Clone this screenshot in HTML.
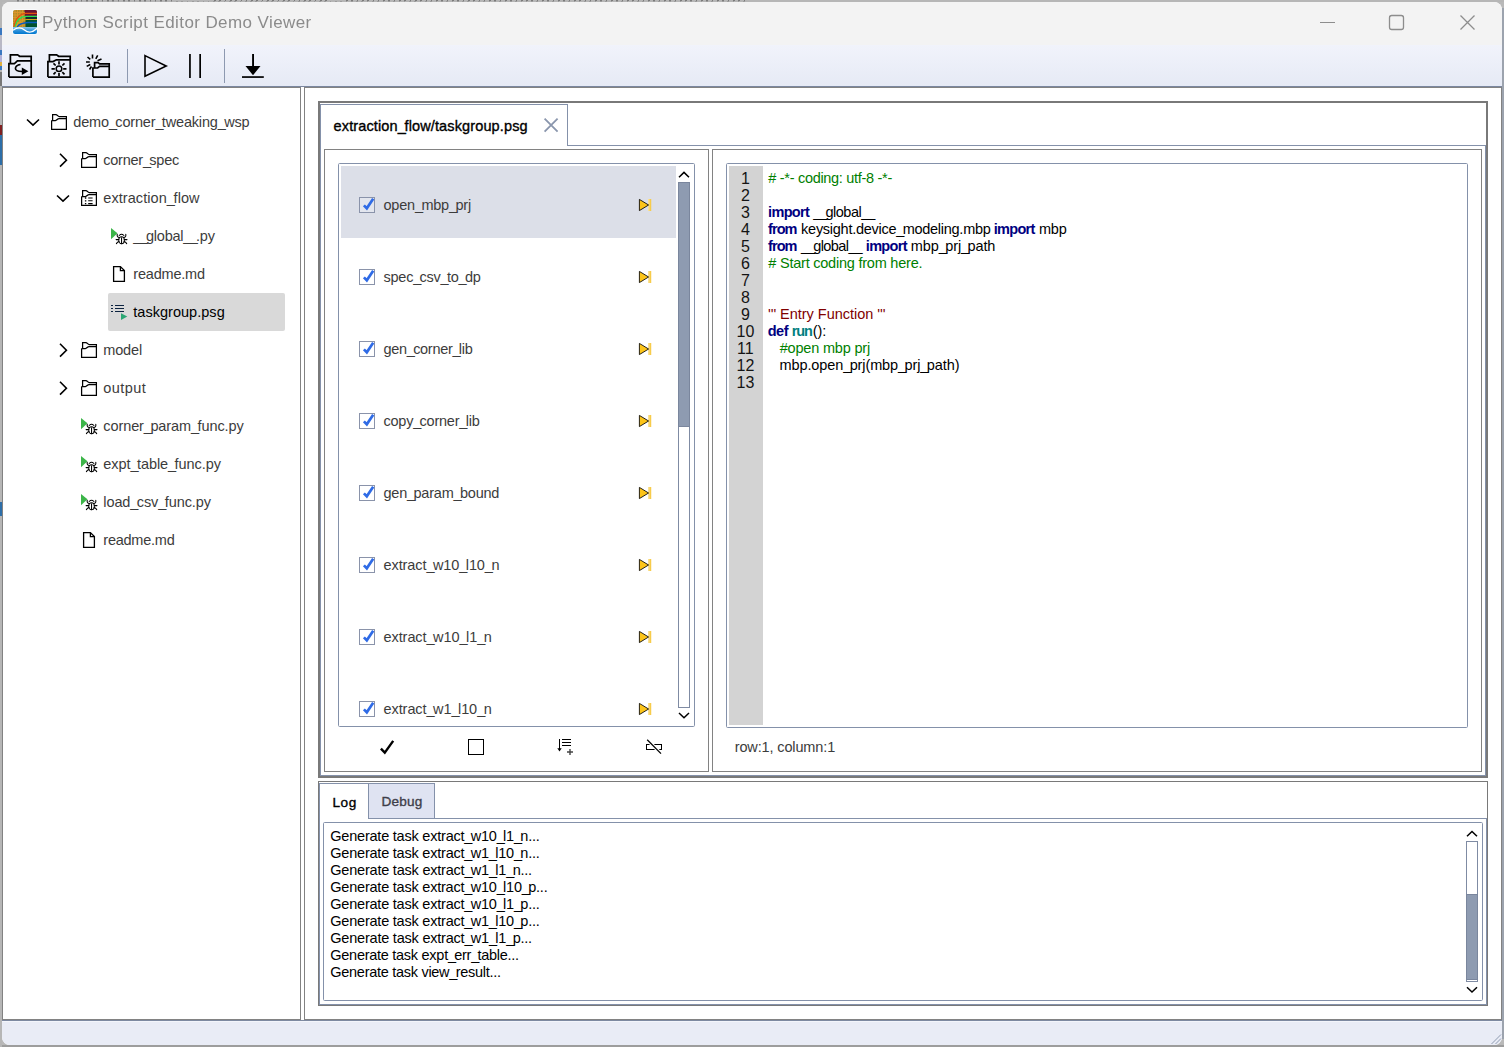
<!DOCTYPE html>
<html><head><meta charset="utf-8"><title>Python Script Editor Demo Viewer</title>
<style>
html,body{margin:0;padding:0;}
body{width:1504px;height:1047px;overflow:hidden;background:#b9b9b9;font-family:"Liberation Sans",sans-serif;position:relative;}
#win{position:absolute;left:0;top:0;width:1504px;height:1047px;clip-path:inset(2px 2px 2px 2px round 8px);background:#fff;}
svg{position:absolute;left:0;top:0;}
.t i{font-style:normal;}
.t{position:absolute;white-space:pre;line-height:24px;height:24px;font-family:"Liberation Sans",sans-serif;}
</style></head><body>
<div style="position:absolute;left:0;top:0;width:1504px;height:2px;background:#b6b6b6"></div>
<div style="position:absolute;left:0;top:1045px;width:1504px;height:2px;background:#9d9d9d"></div>
<div style="position:absolute;left:1502px;top:8px;width:2px;height:1031px;background:#9ca3ae"></div>
<div style="position:absolute;left:0;top:0;width:2px;height:1047px;background:linear-gradient(#b6b6b6 0 28px,#3a78c0 28px 35px,#b9b9c6 35px 50px,#3a78c0 50px 55px,#b0b0d8 55px 62px,#e0b040 62px 66px,#3a78c0 66px 70px,#b6b6b6 70px 72px,#777 72px 86px,#b6b6b6 86px 125px,#802020 125px 135px,#2d6ea8 135px 165px,#b6b6b6 165px 502px,#2d6ea8 502px 516px,#b6b6b6 516px)"></div>
<div style="position:absolute;left:17px;top:0;width:158px;height:1px;background:repeating-linear-gradient(90deg,#7a7a7a 0 1.6px,transparent 1.6px 5.3px)"></div>
<div style="position:absolute;left:214px;top:0;width:116px;height:1px;background:repeating-linear-gradient(90deg,#7a7a7a 0 1.6px,transparent 1.6px 5.3px)"></div>
<div style="position:absolute;left:346px;top:0;width:402px;height:1px;background:repeating-linear-gradient(90deg,#7a7a7a 0 1.6px,transparent 1.6px 5.3px)"></div>
<div style="position:absolute;left:17px;top:1px;width:731px;height:1px;background:repeating-linear-gradient(90deg,rgba(110,110,110,.35) 0 1.6px,transparent 1.6px 5.3px)"></div>
<div id="win">
<svg width="1504" height="1047" viewBox="0 0 1504 1047">
<defs>
<linearGradient id="tb" x1="0" y1="0" x2="0" y2="1"><stop offset="0" stop-color="#f1f3fb"/><stop offset="1" stop-color="#e6eaf5"/></linearGradient>
<linearGradient id="sea" x1="0" y1="0" x2="0" y2="1"><stop offset="0" stop-color="#8cc6ea"/><stop offset="0.55" stop-color="#2a8fd8"/><stop offset="1" stop-color="#0078d0"/></linearGradient>
<linearGradient id="ybar" x1="0" y1="0" x2="1" y2="0"><stop offset="0" stop-color="#fbe7a8"/><stop offset="1" stop-color="#f6c431"/></linearGradient>
</defs>
<rect x="0" y="0" width="1504" height="45" fill="#f3f3f3" />
<rect x="0" y="45" width="1504" height="41" fill="url(#tb)" />
<rect x="0" y="86" width="1504" height="1" fill="#7b879f" />
<rect x="2" y="87" width="299" height="1" fill="#828282" />
<rect x="2" y="1019" width="299" height="1" fill="#828282" />
<rect x="2" y="87" width="1" height="933" fill="#828282" />
<rect x="300" y="87" width="1" height="933" fill="#828282" />
<rect x="304" y="87" width="1198" height="1" fill="#828282" />
<rect x="304" y="1019" width="1198" height="1" fill="#828282" />
<rect x="304" y="87" width="1" height="933" fill="#828282" />
<rect x="1501" y="87" width="1" height="933" fill="#828282" />
<rect x="0" y="1020" width="1504" height="1" fill="#7d89a1" />
<rect x="0" y="1021" width="1504" height="1" fill="#f3f5fb" />
<rect x="0" y="1022" width="1504" height="25" fill="#e9ecf6" />
<path d="M1491.5,1044 L1501,1034.5 M1495.5,1044 L1501,1038.5" stroke="#8e9ab0" stroke-width="1" fill="none" />
<g>
<rect x="12" y="9" width="26" height="26" rx="3" fill="#f8f9fb"/>
<clipPath id="ic"><rect x="13" y="10" width="24" height="24" rx="2"/></clipPath>
<g clip-path="url(#ic)">
<rect x="13" y="10" width="24" height="17" fill="#ad8c2c"/>
<rect x="24.5" y="10" width="13" height="6" fill="#6a1530"/>
<rect x="25.5" y="16" width="12" height="4" fill="#12302e"/>
<rect x="25.5" y="20" width="12" height="7" fill="#02522f"/>
<path d="M13,12.5 H25 M13,15 H25 M13,17.5 H25 M13,20 H25 M13,22.500 H25 M13,25 H25 M15,10 V27 M17.500,10 V27 M20,10 V27 M22.500,10 V27" stroke="#ea982a" stroke-width="0.9" opacity="0.85"/>
<path d="M14,27 C15,19 20,13.6 26,13.4 H37" stroke="#e2500f" stroke-width="1.2" fill="none"/>
<path d="M15,27 C16.500,20 20,16.600 26,16.400 H37" stroke="#25e24f" stroke-width="1.2" fill="none"/>
<path d="M16,27 C18,22 21,19.800 27,19.500 H37" stroke="#d6a81f" stroke-width="1.2" fill="none"/>
<path d="M17,27 C19,24 22,22.800 28,22.500 H37" stroke="#0a5cc0" stroke-width="1.3" fill="none"/>
<rect x="13" y="27" width="24" height="7" fill="url(#sea)"/>
<path d="M13,30.300 C17,27.200 21,27 24.500,30 C28,33 32,33.300 37,28.300" stroke="#fff" stroke-width="1.3" fill="none"/>
</g></g>
<rect x="1320" y="22" width="15" height="1" fill="#8d8d8d" />
<rect x="1389.5" y="15.5" width="14" height="14" rx="2.2" fill="none" stroke="#8d8d8d" stroke-width="1.3"/>
<path d="M1460.5,15.5 L1474.5,29.5 M1474.5,15.5 L1460.5,29.5" stroke="#8d8d8d" stroke-width="1.3" fill="none" />
<path d="M8.9,77.1 H31.2 V56.3 H19.6 L17.6,54.8 H10.4 V63.6 M8.9,77.1 V63.6 H14.4 L17.4,60.8 H31.2" stroke="#000" stroke-width="1.7" fill="none" stroke-linejoin="miter"/>
<path d="M20.5,64.5 C15.5,65 14,69 17,70.6 C18.6,71.6 21,71.5 23,71.5" stroke="#000" stroke-width="1.5" fill="none" />
<polygon points="21.8,67.6 28.4,71.3 21.8,75" fill="#000"/>
<path d="M47.9,77.1 H70.2 V56.3 H58.6 L56.6,54.8 H49.4 V61.6 M47.9,77.1 V61.6 H53 L56.4,59.8 H70.2" stroke="#000" stroke-width="1.7" fill="none" />
<circle cx="59" cy="68.8" r="2.8" fill="none" stroke="#000" stroke-width="1.5"/>
<path d="M63.20,68.80 L66.50,68.80 M62.32,72.12 L64.52,74.32 M59.00,73.00 L59.00,76.30 M55.68,72.12 L53.48,74.32 M54.80,68.80 L51.50,68.80 M55.68,65.48 L53.48,63.28 M59.00,64.60 L59.00,61.30 M62.32,65.48 L64.52,63.28" stroke="#000" stroke-width="1.7" fill="none" />
<path d="M92.9,77.1 H109.2 V63.8 H99.6 L98.1,62.6 H94.6 V68 M92.9,77.1 V68 H97.6 L99.6,66.4 H109.2" stroke="#000" stroke-width="1.7" fill="none" />
<path d="M92.5,54.4 V58.6 M97.7,55.4 L95.8,58.8 M101.5,59 L97.5,60.7 M87.5,57 L90.3,59.4 M86,62 H89.8 M86.7,66.4 L90.3,64.5 M89.5,69.5 L91.5,66.5" stroke="#000" stroke-width="1.6" fill="none" />
<rect x="127" y="49" width="1" height="34" fill="#8d99b0" />
<rect x="224" y="49" width="1" height="34" fill="#8d99b0" />
<path d="M145,55.6 L166.2,66 L145,76.3 Z" stroke="#000" stroke-width="1.6" fill="none" stroke-linejoin="miter"/>
<rect x="189.1" y="54" width="1.7" height="24" fill="#000"/><rect x="199.3" y="54" width="1.7" height="24" fill="#000"/>
<rect x="252.1" y="54" width="1.9" height="13" fill="#000"/>
<polygon points="245.5,66 260.5,66 253,75.3" fill="#000"/>
<rect x="242" y="76.2" width="21.8" height="1.7" fill="#000"/>
<rect x="108" y="293" width="177" height="38" rx="2" fill="#d9d9d9"/>
<path d="M27,119.5 L33,125.1 L39,119.5" stroke="#000" stroke-width="1.6" fill="none" />
<g transform="translate(51,114)" fill="none" stroke="#000" stroke-width="1.25"><path d="M0.6,6.5 V15.4 H15.4 V2.5 H8.2 C6.8,2.5 6.4,0.6 4.8,0.6 H1.6 V6.5 M0.6,6.5 H4.4 C6,6.5 6.4,4.6 8,4.6 H15.4"/></g>
<path d="M60,153.8 L66.4,160.2 L60,166.6" stroke="#000" stroke-width="1.6" fill="none" />
<g transform="translate(81,152)" fill="none" stroke="#000" stroke-width="1.25"><path d="M0.6,6.5 V15.4 H15.4 V2.5 H8.2 C6.8,2.5 6.4,0.6 4.8,0.6 H1.6 V6.5 M0.6,6.5 H4.4 C6,6.5 6.4,4.6 8,4.6 H15.4"/></g>
<path d="M57,195.5 L63,201.1 L69,195.5" stroke="#000" stroke-width="1.6" fill="none" />
<g transform="translate(81,190)" fill="none" stroke="#000" stroke-width="1.25"><path d="M0.6,6.5 V15.4 H15.4 V2.5 H8.2 C6.8,2.5 6.4,0.6 4.8,0.6 H1.6 V6.5 M0.6,6.5 H4.4 C6,6.5 6.4,4.6 8,4.6 H15.4"/><path d="M7.2,8 H11.6 M7.2,10.800 H11.6 M7.2,13.600 H11.6" stroke-width="1.1"/><path d="M3.9,8 H5.3 M3.9,10.800 H5.3 M3.9,13.600 H5.3" stroke-width="1.3"/></g>
<g transform="translate(111,228)"><polygon points="0,0 6.5,5.3 0,11.2" fill="#3cb549"/><g fill="none" stroke="#000" stroke-width="1.05" stroke-linecap="round" stroke-linejoin="round"><ellipse cx="10.55" cy="12.300" rx="2.8" ry="3.5" fill="#fff"/><path d="M10.55,9.800 V15.6"/><path d="M8.200,7.500 Q10.55,5.100 12.900,7.500"/><path d="M6.200,6.200 V8 Q6.400,9.100 7.900,9.400 M14.800,6.200 V8 Q14.600,9.100 13.200,9.400"/><path d="M7.800,11.600 H5.100 M13.300,11.600 H16 M8,13.500 L6.600,14.200 L5.400,15.700 M13.100,13.500 L14.500,14.200 L15.700,15.700"/></g></g>
<g transform="translate(111,266)" fill="none" stroke="#000" stroke-width="1.3"><path d="M2.600,0.600 H9.400 L13.400,4.600 V15.400 H2.600 Z M9.400,0.600 V4.600 H13.400"/></g>
<g transform="translate(111,304)"><path d="M0,1.500 H2 M0,4.500 H2 M0,7.500 H2 M4,1.500 H13 M4,4.500 H13 M4,7.500 H13" stroke="#0c2340" stroke-width="1.1" fill="none"/><polygon points="10,9.200 16.300,12.600 10,16" fill="#2ba673"/></g>
<path d="M60,343.8 L66.4,350.2 L60,356.6" stroke="#000" stroke-width="1.6" fill="none" />
<g transform="translate(81,342)" fill="none" stroke="#000" stroke-width="1.25"><path d="M0.6,6.5 V15.4 H15.4 V2.5 H8.2 C6.8,2.5 6.4,0.6 4.8,0.6 H1.6 V6.5 M0.6,6.5 H4.4 C6,6.5 6.4,4.6 8,4.6 H15.4"/></g>
<path d="M60,381.8 L66.4,388.2 L60,394.6" stroke="#000" stroke-width="1.6" fill="none" />
<g transform="translate(81,380)" fill="none" stroke="#000" stroke-width="1.25"><path d="M0.6,6.5 V15.4 H15.4 V2.5 H8.2 C6.8,2.5 6.4,0.6 4.8,0.6 H1.6 V6.5 M0.6,6.5 H4.4 C6,6.5 6.4,4.6 8,4.6 H15.4"/></g>
<g transform="translate(81,418)"><polygon points="0,0 6.5,5.3 0,11.2" fill="#3cb549"/><g fill="none" stroke="#000" stroke-width="1.05" stroke-linecap="round" stroke-linejoin="round"><ellipse cx="10.55" cy="12.300" rx="2.8" ry="3.5" fill="#fff"/><path d="M10.55,9.800 V15.6"/><path d="M8.200,7.500 Q10.55,5.100 12.900,7.500"/><path d="M6.200,6.200 V8 Q6.400,9.100 7.900,9.400 M14.800,6.200 V8 Q14.600,9.100 13.200,9.400"/><path d="M7.800,11.600 H5.100 M13.300,11.600 H16 M8,13.500 L6.600,14.200 L5.400,15.700 M13.100,13.500 L14.500,14.200 L15.700,15.700"/></g></g>
<g transform="translate(81,456)"><polygon points="0,0 6.5,5.3 0,11.2" fill="#3cb549"/><g fill="none" stroke="#000" stroke-width="1.05" stroke-linecap="round" stroke-linejoin="round"><ellipse cx="10.55" cy="12.300" rx="2.8" ry="3.5" fill="#fff"/><path d="M10.55,9.800 V15.6"/><path d="M8.200,7.500 Q10.55,5.100 12.900,7.500"/><path d="M6.200,6.200 V8 Q6.400,9.100 7.900,9.400 M14.800,6.200 V8 Q14.600,9.100 13.200,9.400"/><path d="M7.800,11.600 H5.100 M13.300,11.600 H16 M8,13.500 L6.600,14.200 L5.400,15.700 M13.100,13.500 L14.500,14.200 L15.700,15.700"/></g></g>
<g transform="translate(81,494)"><polygon points="0,0 6.5,5.3 0,11.2" fill="#3cb549"/><g fill="none" stroke="#000" stroke-width="1.05" stroke-linecap="round" stroke-linejoin="round"><ellipse cx="10.55" cy="12.300" rx="2.8" ry="3.5" fill="#fff"/><path d="M10.55,9.800 V15.6"/><path d="M8.200,7.500 Q10.55,5.100 12.900,7.500"/><path d="M6.200,6.200 V8 Q6.400,9.100 7.900,9.400 M14.800,6.200 V8 Q14.600,9.100 13.200,9.400"/><path d="M7.800,11.600 H5.100 M13.300,11.600 H16 M8,13.500 L6.600,14.200 L5.400,15.700 M13.100,13.500 L14.500,14.200 L15.700,15.700"/></g></g>
<g transform="translate(81,532)" fill="none" stroke="#000" stroke-width="1.3"><path d="M2.600,0.600 H9.400 L13.400,4.600 V15.400 H2.600 Z M9.400,0.600 V4.600 H13.400"/></g>
<rect x="318" y="101" width="1170" height="2" fill="#797979" />
<rect x="318" y="776" width="1170" height="2" fill="#797979" />
<rect x="318" y="101" width="2" height="677" fill="#797979" />
<rect x="1486" y="101" width="2" height="677" fill="#797979" />
<rect x="320" y="104" width="248" height="1" fill="#8491aa" />
<rect x="320" y="104" width="1" height="672" fill="#8491aa" />
<rect x="567" y="104" width="1" height="42" fill="#8491aa" />
<rect x="567" y="145" width="919" height="1" fill="#8491aa" />
<rect x="1485" y="145" width="1" height="631" fill="#8491aa" />
<rect x="320" y="775" width="1166" height="1" fill="#8491aa" />
<path d="M544.6,118.6 L557.6,131.6 M557.6,118.6 L544.6,131.6" stroke="#8a96ad" stroke-width="1.8" fill="none" />
<rect x="324" y="149" width="385" height="1" fill="#828282" />
<rect x="324" y="771" width="385" height="1" fill="#828282" />
<rect x="324" y="149" width="1" height="623" fill="#828282" />
<rect x="708" y="149" width="1" height="623" fill="#828282" />
<rect x="712" y="149" width="770" height="1" fill="#828282" />
<rect x="712" y="771" width="770" height="1" fill="#828282" />
<rect x="712" y="149" width="1" height="623" fill="#828282" />
<rect x="1481" y="149" width="1" height="623" fill="#828282" />
<rect x="338.5" y="163.5" width="356" height="563" rx="1.1" fill="none" stroke="#8491aa" stroke-width="1"/>
<rect x="341" y="166" width="335" height="72" fill="#dcdfe8" />
<rect x="359.5" y="197.5" width="15" height="15" fill="#e3e6ee" stroke="#8a93aa" stroke-width="1"/>
<path d="M363.9,205.4 L366.8,208.3 L373.2,198.8" stroke="#2f6be6" stroke-width="2.7" fill="none" />
<rect x="648" y="199" width="3.2" height="12" fill="url(#ybar)"/>
<polygon points="639.4,199.4 648.6,205 639.4,210.6" fill="#fcc419" stroke="#000" stroke-width="0.85" stroke-linejoin="miter"/>
<rect x="359.5" y="269.5" width="15" height="15" fill="#fff" stroke="#8a93aa" stroke-width="1"/>
<path d="M363.9,277.4 L366.8,280.3 L373.2,270.8" stroke="#2f6be6" stroke-width="2.7" fill="none" />
<rect x="648" y="271" width="3.2" height="12" fill="url(#ybar)"/>
<polygon points="639.4,271.4 648.6,277 639.4,282.6" fill="#fcc419" stroke="#000" stroke-width="0.85" stroke-linejoin="miter"/>
<rect x="359.5" y="341.5" width="15" height="15" fill="#fff" stroke="#8a93aa" stroke-width="1"/>
<path d="M363.9,349.4 L366.8,352.3 L373.2,342.8" stroke="#2f6be6" stroke-width="2.7" fill="none" />
<rect x="648" y="343" width="3.2" height="12" fill="url(#ybar)"/>
<polygon points="639.4,343.4 648.6,349 639.4,354.6" fill="#fcc419" stroke="#000" stroke-width="0.85" stroke-linejoin="miter"/>
<rect x="359.5" y="413.5" width="15" height="15" fill="#fff" stroke="#8a93aa" stroke-width="1"/>
<path d="M363.9,421.4 L366.8,424.3 L373.2,414.8" stroke="#2f6be6" stroke-width="2.7" fill="none" />
<rect x="648" y="415" width="3.2" height="12" fill="url(#ybar)"/>
<polygon points="639.4,415.4 648.6,421 639.4,426.6" fill="#fcc419" stroke="#000" stroke-width="0.85" stroke-linejoin="miter"/>
<rect x="359.5" y="485.5" width="15" height="15" fill="#fff" stroke="#8a93aa" stroke-width="1"/>
<path d="M363.9,493.4 L366.8,496.3 L373.2,486.8" stroke="#2f6be6" stroke-width="2.7" fill="none" />
<rect x="648" y="487" width="3.2" height="12" fill="url(#ybar)"/>
<polygon points="639.4,487.4 648.6,493 639.4,498.6" fill="#fcc419" stroke="#000" stroke-width="0.85" stroke-linejoin="miter"/>
<rect x="359.5" y="557.5" width="15" height="15" fill="#fff" stroke="#8a93aa" stroke-width="1"/>
<path d="M363.9,565.4 L366.8,568.3 L373.2,558.8" stroke="#2f6be6" stroke-width="2.7" fill="none" />
<rect x="648" y="559" width="3.2" height="12" fill="url(#ybar)"/>
<polygon points="639.4,559.4 648.6,565 639.4,570.6" fill="#fcc419" stroke="#000" stroke-width="0.85" stroke-linejoin="miter"/>
<rect x="359.5" y="629.5" width="15" height="15" fill="#fff" stroke="#8a93aa" stroke-width="1"/>
<path d="M363.9,637.4 L366.8,640.3 L373.2,630.8" stroke="#2f6be6" stroke-width="2.7" fill="none" />
<rect x="648" y="631" width="3.2" height="12" fill="url(#ybar)"/>
<polygon points="639.4,631.4 648.6,637 639.4,642.6" fill="#fcc419" stroke="#000" stroke-width="0.85" stroke-linejoin="miter"/>
<rect x="359.5" y="701.5" width="15" height="15" fill="#fff" stroke="#8a93aa" stroke-width="1"/>
<path d="M363.9,709.4 L366.8,712.3 L373.2,702.8" stroke="#2f6be6" stroke-width="2.7" fill="none" />
<rect x="648" y="703" width="3.2" height="12" fill="url(#ybar)"/>
<polygon points="639.4,703.4 648.6,709 639.4,714.6" fill="#fcc419" stroke="#000" stroke-width="0.85" stroke-linejoin="miter"/>
<path d="M679,177.2 L684,172.4 L689,177.2" stroke="#000" stroke-width="1.5" fill="none" />
<rect x="678" y="182" width="12" height="526" fill="#fff" />
<rect x="678" y="182" width="12" height="1" fill="#7f8ba3" />
<rect x="678" y="707" width="12" height="1" fill="#7f8ba3" />
<rect x="678" y="182" width="1" height="526" fill="#7f8ba3" />
<rect x="689" y="182" width="1" height="526" fill="#7f8ba3" />
<rect x="678" y="182" width="12" height="245" fill="#7a869d" />
<rect x="679" y="183" width="10" height="243" fill="#8e9bb1" />
<path d="M679,713 L684,717.8 L689,713" stroke="#000" stroke-width="1.5" fill="none" />
<path d="M380.9,748.6 L384.8,752.7 L393.2,740.9" stroke="#000" stroke-width="2.4" fill="none" />
<rect x="468" y="739" width="16" height="1" fill="#000" />
<rect x="468" y="754" width="16" height="1" fill="#000" />
<rect x="468" y="739" width="1" height="16" fill="#000" />
<rect x="483" y="739" width="1" height="16" fill="#000" />
<rect x="559" y="739" width="1" height="11" fill="#000" />
<polygon points="557.3,748.3 561.7,748.3 559.5,751.6" fill="#000"/>
<rect x="562" y="739" width="9" height="1" fill="#000" />
<rect x="562" y="742" width="9" height="1" fill="#000" />
<rect x="562" y="745" width="9" height="1" fill="#000" />
<path d="M567,752 H573 M570,749 V755" stroke="#444" stroke-width="1.4" fill="none" />
<rect x="646.5" y="744.5" width="15" height="5" fill="none" stroke="#000" stroke-width="1"/>
<path d="M648.5,741 L659.8,752.4" stroke="#fff" stroke-width="3.4" fill="none" />
<path d="M647.2,739.8 L661,753.6" stroke="#000" stroke-width="1.3" fill="none" />
<rect x="726.5" y="163.5" width="741" height="564" rx="1.1" fill="none" stroke="#8491aa" stroke-width="1"/>
<rect x="729" y="166" width="34" height="559" fill="#d3d3d3" />
<rect x="318" y="781" width="1170" height="1" fill="#797979" />
<rect x="318" y="1005" width="1170" height="1" fill="#797979" />
<rect x="318" y="781" width="1" height="225" fill="#797979" />
<rect x="1487" y="781" width="1" height="225" fill="#797979" />
<rect x="319" y="783" width="50" height="1" fill="#8491aa" />
<rect x="319" y="783" width="1" height="222" fill="#8491aa" />
<rect x="368" y="783" width="67" height="36" fill="#dfe3f2" />
<rect x="368" y="783" width="67" height="1" fill="#8491aa" />
<rect x="368" y="818" width="67" height="1" fill="#8491aa" />
<rect x="368" y="783" width="1" height="36" fill="#8491aa" />
<rect x="434" y="783" width="1" height="36" fill="#8491aa" />
<rect x="434" y="818" width="1053" height="1" fill="#8491aa" />
<rect x="1486" y="818" width="1" height="187" fill="#8491aa" />
<rect x="319" y="1004" width="1168" height="1" fill="#8491aa" />
<rect x="323.5" y="822.5" width="1159" height="178" rx="1.1" fill="none" stroke="#8491aa" stroke-width="1"/>
<path d="M1467,836.3 L1472,831.5 L1477,836.3" stroke="#000" stroke-width="1.5" fill="none" />
<rect x="1466" y="841" width="12" height="141" fill="#fff" />
<rect x="1466" y="841" width="12" height="1" fill="#7f8ba3" />
<rect x="1466" y="981" width="12" height="1" fill="#7f8ba3" />
<rect x="1466" y="841" width="1" height="141" fill="#7f8ba3" />
<rect x="1477" y="841" width="1" height="141" fill="#7f8ba3" />
<rect x="1466" y="894" width="12" height="86" fill="#7a869d" />
<rect x="1467" y="895" width="10" height="84" fill="#8e9bb1" />
<path d="M1467,987.2 L1472,992 L1477,987.2" stroke="#000" stroke-width="1.5" fill="none" />
</svg>
<span class="t" style="left:42.30px;top:11.31px;font-size:17px;color:#8b8b8b;letter-spacing:0.404px;will-change:transform;">Python Script Editor Demo Viewer</span>
<span class="t" style="left:73.30px;top:109.98px;font-size:14.5px;color:#3c3c3c;letter-spacing:-0.175px;">demo<i style="letter-spacing:-1.625px">_</i>corner<i style="letter-spacing:-1.625px">_</i>tweaking<i style="letter-spacing:-1.625px">_</i>wsp</span>
<span class="t" style="left:103.30px;top:147.98px;font-size:14.5px;color:#3c3c3c;letter-spacing:-0.244px;">corner<i style="letter-spacing:-1.694px">_</i>spec</span>
<span class="t" style="left:103.30px;top:185.98px;font-size:14.5px;color:#3c3c3c;letter-spacing:0.067px;">extraction<i style="letter-spacing:-1.383px">_</i>flow</span>
<span class="t" style="left:133.30px;top:223.98px;font-size:14.5px;color:#3c3c3c;letter-spacing:-0.242px;"><i style="letter-spacing:-1.692px">_</i><i style="letter-spacing:-1.692px">_</i>global<i style="letter-spacing:-1.692px">_</i><i style="letter-spacing:-1.692px">_</i>.py</span>
<span class="t" style="left:133.30px;top:261.98px;font-size:14.5px;color:#3c3c3c;letter-spacing:-0.204px;">readme.md</span>
<span class="t" style="left:133.30px;top:299.98px;font-size:14.5px;color:#000;letter-spacing:0.026px;">taskgroup.psg</span>
<span class="t" style="left:103.30px;top:337.98px;font-size:14.5px;color:#3c3c3c;letter-spacing:-0.173px;">model</span>
<span class="t" style="left:103.30px;top:375.98px;font-size:14.5px;color:#3c3c3c;letter-spacing:0.417px;">output</span>
<span class="t" style="left:103.30px;top:413.98px;font-size:14.5px;color:#3c3c3c;letter-spacing:-0.094px;">corner<i style="letter-spacing:-1.544px">_</i>param<i style="letter-spacing:-1.544px">_</i>func.py</span>
<span class="t" style="left:103.30px;top:451.98px;font-size:14.5px;color:#3c3c3c;letter-spacing:-0.072px;">expt<i style="letter-spacing:-1.522px">_</i>table<i style="letter-spacing:-1.522px">_</i>func.py</span>
<span class="t" style="left:103.30px;top:489.98px;font-size:14.5px;color:#3c3c3c;letter-spacing:-0.103px;">load<i style="letter-spacing:-1.553px">_</i>csv<i style="letter-spacing:-1.553px">_</i>func.py</span>
<span class="t" style="left:103.30px;top:527.98px;font-size:14.5px;color:#3c3c3c;letter-spacing:-0.242px;">readme.md</span>
<span class="t" style="left:333.60px;top:114.18px;font-size:14.5px;color:#000;letter-spacing:0.129px;-webkit-text-stroke:0.35px #000;">extraction<i style="letter-spacing:-1.321px">_</i>flow/taskgroup.psg</span>
<span class="t" style="left:383.50px;top:192.98px;font-size:14.5px;color:#3c3c3c;letter-spacing:-0.201px;">open<i style="letter-spacing:-1.651px">_</i>mbp<i style="letter-spacing:-1.651px">_</i>prj</span>
<span class="t" style="left:383.50px;top:264.98px;font-size:14.5px;color:#3c3c3c;letter-spacing:-0.249px;">spec<i style="letter-spacing:-1.699px">_</i>csv<i style="letter-spacing:-1.699px">_</i>to<i style="letter-spacing:-1.699px">_</i>dp</span>
<span class="t" style="left:383.50px;top:336.98px;font-size:14.5px;color:#3c3c3c;letter-spacing:-0.294px;">gen<i style="letter-spacing:-1.744px">_</i>corner<i style="letter-spacing:-1.744px">_</i>lib</span>
<span class="t" style="left:383.50px;top:408.98px;font-size:14.5px;color:#3c3c3c;letter-spacing:-0.233px;">copy<i style="letter-spacing:-1.683px">_</i>corner<i style="letter-spacing:-1.683px">_</i>lib</span>
<span class="t" style="left:383.50px;top:480.98px;font-size:14.5px;color:#3c3c3c;letter-spacing:-0.210px;">gen<i style="letter-spacing:-1.660px">_</i>param<i style="letter-spacing:-1.660px">_</i>bound</span>
<span class="t" style="left:383.50px;top:552.98px;font-size:14.5px;color:#3c3c3c;letter-spacing:-0.092px;">extract<i style="letter-spacing:-1.542px">_</i>w10<i style="letter-spacing:-1.542px">_</i>l10<i style="letter-spacing:-1.542px">_</i>n</span>
<span class="t" style="left:383.50px;top:624.98px;font-size:14.5px;color:#3c3c3c;letter-spacing:-0.074px;">extract<i style="letter-spacing:-1.524px">_</i>w10<i style="letter-spacing:-1.524px">_</i>l1<i style="letter-spacing:-1.524px">_</i>n</span>
<span class="t" style="left:383.50px;top:696.98px;font-size:14.5px;color:#3c3c3c;letter-spacing:-0.074px;">extract<i style="letter-spacing:-1.524px">_</i>w1<i style="letter-spacing:-1.524px">_</i>l10<i style="letter-spacing:-1.524px">_</i>n</span>
<span class="t" style="left:745.40px;top:167.46px;font-size:16px;color:#141414;transform:translateX(-50%);">1</span>
<span class="t" style="left:745.40px;top:184.46px;font-size:16px;color:#141414;transform:translateX(-50%);">2</span>
<span class="t" style="left:745.40px;top:201.46px;font-size:16px;color:#141414;transform:translateX(-50%);">3</span>
<span class="t" style="left:745.40px;top:218.46px;font-size:16px;color:#141414;transform:translateX(-50%);">4</span>
<span class="t" style="left:745.40px;top:235.46px;font-size:16px;color:#141414;transform:translateX(-50%);">5</span>
<span class="t" style="left:745.40px;top:252.46px;font-size:16px;color:#141414;transform:translateX(-50%);">6</span>
<span class="t" style="left:745.40px;top:269.46px;font-size:16px;color:#141414;transform:translateX(-50%);">7</span>
<span class="t" style="left:745.40px;top:286.46px;font-size:16px;color:#141414;transform:translateX(-50%);">8</span>
<span class="t" style="left:745.40px;top:303.46px;font-size:16px;color:#141414;transform:translateX(-50%);">9</span>
<span class="t" style="left:745.40px;top:320.46px;font-size:16px;color:#141414;transform:translateX(-50%);">10</span>
<span class="t" style="left:745.40px;top:337.46px;font-size:16px;color:#141414;transform:translateX(-50%);">11</span>
<span class="t" style="left:745.40px;top:354.46px;font-size:16px;color:#141414;transform:translateX(-50%);">12</span>
<span class="t" style="left:745.40px;top:371.46px;font-size:16px;color:#141414;transform:translateX(-50%);">13</span>
<span class="t" style="left:768.30px;top:165.98px;font-size:14.5px;color:#008000;letter-spacing:-0.298px;"># -*- coding: utf-8 -*-</span>
<span class="t" style="left:768.10px;top:199.98px;font-size:14.5px;color:#000080;font-weight:bold;letter-spacing:-0.681px;">import</span>
<span class="t" style="left:813.30px;top:199.98px;font-size:14.5px;color:#000;letter-spacing:-0.512px;"><i style="letter-spacing:-1.962px">_</i><i style="letter-spacing:-1.962px">_</i>global<i style="letter-spacing:-1.962px">_</i><i style="letter-spacing:-1.962px">_</i></span>
<span class="t" style="left:768.10px;top:216.98px;font-size:14.5px;color:#000080;font-weight:bold;letter-spacing:-0.940px;">from</span>
<span class="t" style="left:801.10px;top:216.98px;font-size:14.5px;color:#000;letter-spacing:-0.264px;">keysight.device<i style="letter-spacing:-1.714px">_</i>modeling.mbp</span>
<span class="t" style="left:993.70px;top:216.98px;font-size:14.5px;color:#000080;font-weight:bold;letter-spacing:-0.681px;">import</span>
<span class="t" style="left:1038.90px;top:216.98px;font-size:14.5px;color:#000;letter-spacing:-0.204px;">mbp</span>
<span class="t" style="left:768.10px;top:233.98px;font-size:14.5px;color:#000080;font-weight:bold;letter-spacing:-0.940px;">from</span>
<span class="t" style="left:801.10px;top:233.98px;font-size:14.5px;color:#000;letter-spacing:-0.567px;"><i style="letter-spacing:-2.017px">_</i><i style="letter-spacing:-2.017px">_</i>global<i style="letter-spacing:-2.017px">_</i><i style="letter-spacing:-2.017px">_</i></span>
<span class="t" style="left:865.80px;top:233.98px;font-size:14.5px;color:#000080;font-weight:bold;letter-spacing:-0.681px;">import</span>
<span class="t" style="left:910.80px;top:233.98px;font-size:14.5px;color:#000;letter-spacing:-0.106px;">mbp<i style="letter-spacing:-1.556px">_</i>prj<i style="letter-spacing:-1.556px">_</i>path</span>
<span class="t" style="left:768.30px;top:250.98px;font-size:14.5px;color:#008000;letter-spacing:-0.224px;"># Start coding from here.</span>
<span class="t" style="left:767.90px;top:301.98px;font-size:14.5px;color:#800000;letter-spacing:-0.026px;">''' Entry Function '''</span>
<span class="t" style="left:767.70px;top:318.98px;font-size:14.5px;color:#000080;font-weight:bold;letter-spacing:-0.425px;">def</span>
<span class="t" style="left:791.70px;top:318.98px;font-size:14.5px;color:#007f7f;font-weight:bold;letter-spacing:-1.079px;">run</span>
<span class="t" style="left:812.70px;top:318.98px;font-size:14.5px;color:#000;letter-spacing:-0.093px;">():</span>
<span class="t" style="left:779.70px;top:335.98px;font-size:14.5px;color:#008000;letter-spacing:-0.183px;">#open mbp prj</span>
<span class="t" style="left:779.50px;top:352.98px;font-size:14.5px;color:#000;letter-spacing:-0.110px;">mbp.open<i style="letter-spacing:-1.560px">_</i>prj(mbp<i style="letter-spacing:-1.560px">_</i>prj<i style="letter-spacing:-1.560px">_</i>path)</span>
<span class="t" style="left:734.70px;top:735.28px;font-size:14.5px;color:#3c3c3c;letter-spacing:-0.132px;">row:1, column:1</span>
<span class="t" style="left:332.50px;top:791.09px;font-size:13.6px;color:#000;letter-spacing:0.560px;-webkit-text-stroke:0.35px #000;">Log</span>
<span class="t" style="left:381.50px;top:789.89px;font-size:13.6px;color:#3e3e4a;letter-spacing:0.211px;-webkit-text-stroke:0.35px #3e3e4a;">Debug</span>
<span class="t" style="left:330.30px;top:823.98px;font-size:14.5px;color:#000;letter-spacing:-0.219px;">Generate task extract<i style="letter-spacing:-1.669px">_</i>w10<i style="letter-spacing:-1.669px">_</i>l1<i style="letter-spacing:-1.669px">_</i>n...</span>
<span class="t" style="left:330.30px;top:840.98px;font-size:14.5px;color:#000;letter-spacing:-0.219px;">Generate task extract<i style="letter-spacing:-1.669px">_</i>w1<i style="letter-spacing:-1.669px">_</i>l10<i style="letter-spacing:-1.669px">_</i>n...</span>
<span class="t" style="left:330.30px;top:857.98px;font-size:14.5px;color:#000;letter-spacing:-0.214px;">Generate task extract<i style="letter-spacing:-1.664px">_</i>w1<i style="letter-spacing:-1.664px">_</i>l1<i style="letter-spacing:-1.664px">_</i>n...</span>
<span class="t" style="left:330.30px;top:874.98px;font-size:14.5px;color:#000;letter-spacing:-0.220px;">Generate task extract<i style="letter-spacing:-1.670px">_</i>w10<i style="letter-spacing:-1.670px">_</i>l10<i style="letter-spacing:-1.670px">_</i>p...</span>
<span class="t" style="left:330.30px;top:891.98px;font-size:14.5px;color:#000;letter-spacing:-0.219px;">Generate task extract<i style="letter-spacing:-1.669px">_</i>w10<i style="letter-spacing:-1.669px">_</i>l1<i style="letter-spacing:-1.669px">_</i>p...</span>
<span class="t" style="left:330.30px;top:908.98px;font-size:14.5px;color:#000;letter-spacing:-0.219px;">Generate task extract<i style="letter-spacing:-1.669px">_</i>w1<i style="letter-spacing:-1.669px">_</i>l10<i style="letter-spacing:-1.669px">_</i>p...</span>
<span class="t" style="left:330.30px;top:925.98px;font-size:14.5px;color:#000;letter-spacing:-0.214px;">Generate task extract<i style="letter-spacing:-1.664px">_</i>w1<i style="letter-spacing:-1.664px">_</i>l1<i style="letter-spacing:-1.664px">_</i>p...</span>
<span class="t" style="left:330.30px;top:942.98px;font-size:14.5px;color:#000;letter-spacing:-0.273px;">Generate task expt<i style="letter-spacing:-1.723px">_</i>err<i style="letter-spacing:-1.723px">_</i>table...</span>
<span class="t" style="left:330.30px;top:959.98px;font-size:14.5px;color:#000;letter-spacing:-0.284px;">Generate task view<i style="letter-spacing:-1.734px">_</i>result...</span>
</div>
</body></html>
